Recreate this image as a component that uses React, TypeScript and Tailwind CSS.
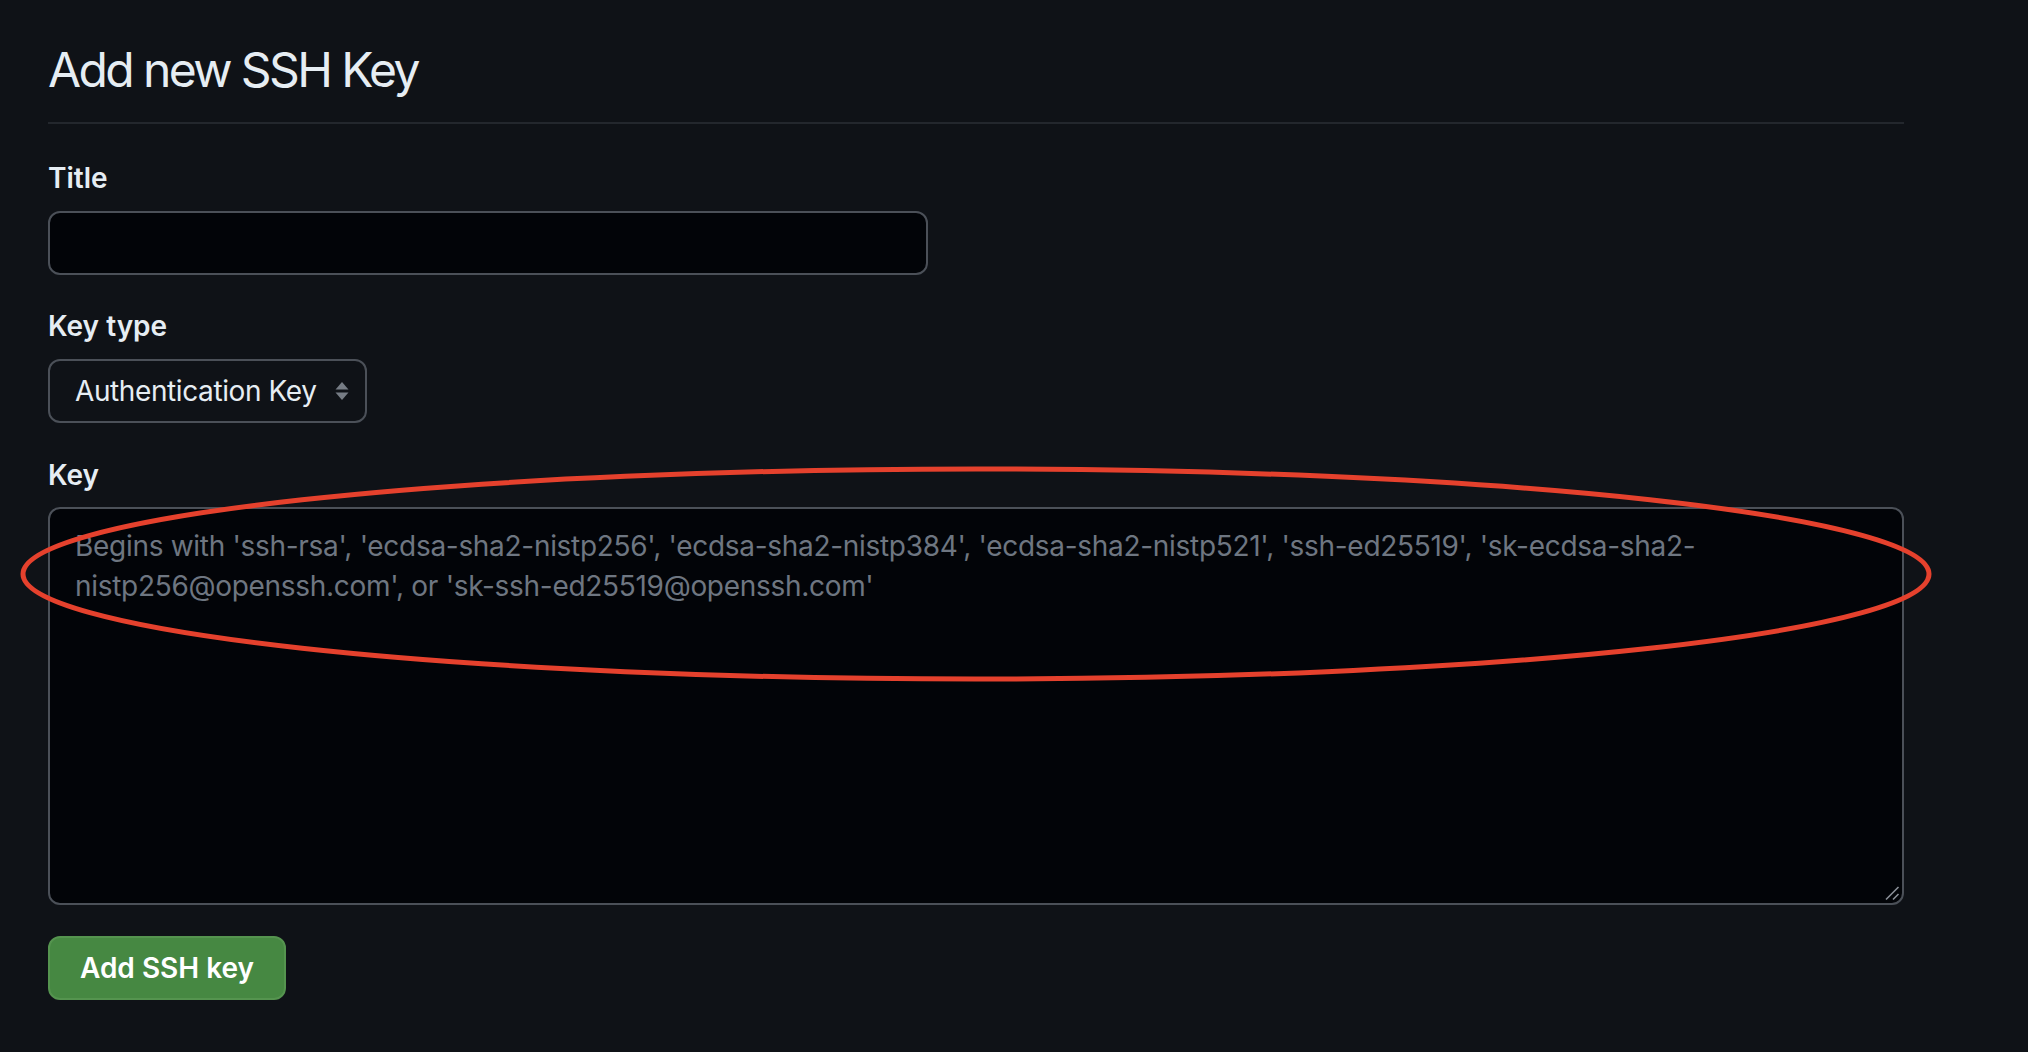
import React from 'react'

const labelCls = "block text-[28px] leading-[40px] font-semibold text-[#e6edf3]"

const SelectArrows: React.FC = () => (
  <svg width="14" height="20" viewBox="0 0 14 20">
    <path d="M0.5 8.5 L7 1 L13.5 8.5 Z" fill="#767c85" />
    <path d="M0.5 11.5 L7 19 L13.5 11.5 Z" fill="#767c85" />
  </svg>
)

const ResizeHandle: React.FC = () => (
  <svg width="16" height="16" viewBox="0 0 16 16" className="absolute right-[2px] bottom-[2px]">
    <path d="M2 14.5 L14.5 2" stroke="#8b9199" strokeWidth="1.6" />
    <path d="M9 14.5 L14.5 9" stroke="#8b9199" strokeWidth="1.6" />
  </svg>
)

export default function App() {
  return (
    <div className="relative min-h-screen w-full overflow-hidden bg-[#0f1217] font-['Inter','Liberation_Sans',sans-serif]">
      <div className="ml-[48px] w-[1856px] pt-[40px] pb-[52px]">
        <div className="pb-[22px] border-b-2 border-[#23272d]">
          <h1 className="text-[48px] leading-[60px] font-normal text-[#e6edf3] tracking-[-2.6px]">Add new SSH Key</h1>
        </div>

        <label className={labelCls + " mt-[34px]"}>Title</label>
        <input
          type="text"
          className="mt-[13px] block h-[64px] w-[880px] rounded-[12px] border-2 border-[#4b5058] bg-[#020408] px-[24px] text-[28px] text-[#e6edf3] outline-none"
        />

        <label className={labelCls + " mt-[31px]"}>Key type</label>
        <div className="mt-[13px] flex h-[64px] w-[319px] items-center justify-between rounded-[12px] border-2 border-[#4b5058] bg-[#0f1217] pl-[25px] pr-[16px]">
          <span className="text-[28px] leading-[40px] text-[#e6edf3] tracking-[-0.4px]">Authentication Key</span>
          <SelectArrows />
        </div>

        <label className={labelCls + " mt-[32px]"}>Key</label>
        <div className="relative mt-[12px] h-[398px] w-full rounded-[12px] border-2 border-[#4b5058] bg-[#020408] pl-[25px] pr-[24px] pt-[17px]">
          <p className="text-[28px] leading-[40px] text-[#6e7681] tracking-[-0.3px]">
            Begins with 'ssh-rsa', 'ecdsa-sha2-nistp256', 'ecdsa-sha2-nistp384', 'ecdsa-sha2-nistp521', 'ssh-ed25519', 'sk-ecdsa-sha2-
            <br />
            nistp256@openssh.com', or 'sk-ssh-ed25519@openssh.com'
          </p>
          <ResizeHandle />
        </div>

        <button className="mt-[31px] flex h-[64px] w-[238px] items-center justify-center rounded-[12px] border-2 border-[#55944f] bg-[#468842] text-[28px] font-semibold text-white">
          Add SSH key
        </button>
      </div>

      {/* red annotation ring */}
      <svg
        className="pointer-events-none absolute left-0 top-0"
        width="2028"
        height="1052"
        viewBox="0 0 2028 1052"
      >
        <ellipse cx="976" cy="574" rx="953" ry="105" fill="none" stroke="#e5412d" strokeWidth="5" />
      </svg>
    </div>
  )
}
